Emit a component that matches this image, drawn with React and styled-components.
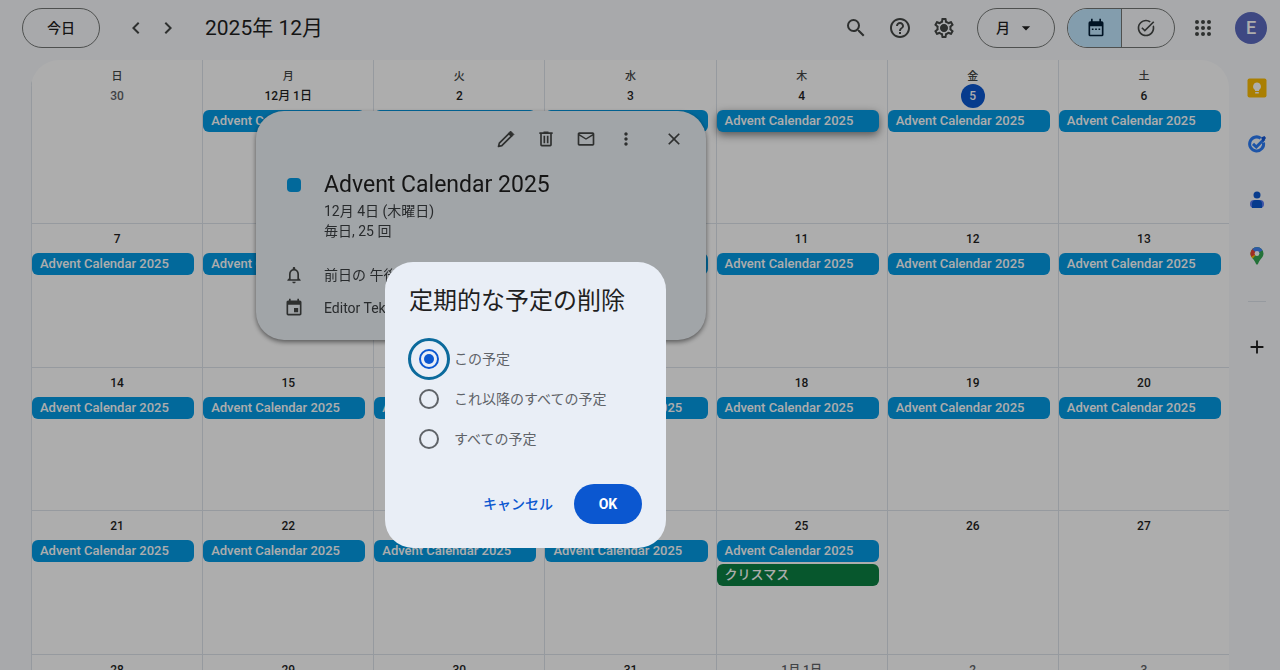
import React, { useState } from "react";
import styled, { createGlobalStyle, css } from "styled-components";
import {
  MdSearch,
  MdHelpOutline,
  MdOutlineSettings,
  MdOutlineTaskAlt,
  MdMailOutline,
  MdMoreVert,
  MdClose,
  MdNotificationsNone,
  MdEvent,
  MdAdd,
  MdChevronLeft,
  MdChevronRight,
  MdArrowDropDown,
} from "react-icons/md";

const GlobalStyle = createGlobalStyle`
  *, *::before, *::after { box-sizing: border-box; }
  body {
    margin: 0;
    overflow: hidden;
    background: #f8fafd;
    color: #1f1f1f;
    font-family: Roboto, "Noto Sans CJK JP", sans-serif;
    font-size: 14px;
    line-height: 20px;
  }
  button { font: inherit; color: inherit; cursor: pointer; }
`;

const Page = styled.div`
  display: flex;
  flex-direction: column;
  height: 100vh;
  overflow: hidden;
`;

const TopBar = styled.header`
  display: flex;
  align-items: center;
  flex: none;
  height: 60px;
  padding: 0 13px 4px 22px;
  color: #444746;
`;

const Pill = styled.button`
  display: flex;
  align-items: center;
  justify-content: center;
  height: 40px;
  width: 78px;
  padding: 0;
  border: 1px solid #747775;
  border-radius: 20px;
  background: transparent;
  color: #1f1f1f;
  font-weight: 500;
`;

const IconButton = styled.button`
  display: flex;
  align-items: center;
  justify-content: center;
  flex: none;
  width: ${(p) => p.$size || 40}px;
  height: 40px;
  padding: 0;
  border: 0;
  border-radius: 50%;
  background: transparent;
  color: #444746;
`;

const Pager = styled.div`
  display: flex;
  margin-left: 20px;
`;

const MonthTitle = styled.h1`
  flex: 1;
  margin: 0 0 0 21px;
  color: #1f1f1f;
  font-size: 21px;
  line-height: 28px;
  font-weight: 400;
`;

const ViewPill = styled(Pill)`
  gap: 6px;
  margin: 0 12px 0 11px;
`;

const ModeSwitch = styled.div`
  display: flex;
  width: 108px;
  height: 40px;
  margin-right: 8px;
  border: 1px solid #747775;
  border-radius: 20px;
  overflow: hidden;
`;

const ModeButton = styled.button`
  display: flex;
  flex: 1;
  align-items: center;
  justify-content: center;
  padding: 0 0 0 4px;
  border: 0;
  background: ${(p) => (p.$active ? "#c2e7ff" : "transparent")};
  color: ${(p) => (p.$active ? "#001d35" : "#444746")};
  & + & {
    padding: 0 4px 0 0;
    border-left: 1px solid #747775;
  }
`;

const Avatar = styled.button`
  width: 32px;
  height: 32px;
  margin-left: 12px;
  padding: 0;
  border: 0;
  border-radius: 50%;
  background: #5c6bc0;
  color: #fff;
  font-size: 18px;
  font-weight: 500;
`;

const Content = styled.div`
  display: flex;
  flex: 1;
  min-height: 0;
`;

const Board = styled.main`
  flex: 1;
  margin-left: 31px;
  border-radius: 28px 28px 0 0;
  background: #fff;
  overflow: hidden;
`;

const WeekdayRow = styled.div`
  display: grid;
  grid-template-columns: repeat(7, 1fr);
  height: 21px;
`;

const Weekday = styled.div`
  padding-top: 9px;
  border-left: 1px solid #dde3ea;
  color: #444746;
  font-size: 11px;
  line-height: 16px;
  font-weight: 500;
  text-align: center;
`;

const MonthGrid = styled.div`
  display: grid;
  grid-template-columns: repeat(7, 1fr);
  grid-template-rows: repeat(5, 1fr);
  height: 717px;
`;

const DayCell = styled.div`
  display: flex;
  flex-direction: column;
  align-items: center;
  gap: 2px;
  min-width: 0;
  padding: 3px 8px 0 0;
  border-left: 1px solid #dde3ea;
  border-bottom: 1px solid #dde3ea;
`;

const DayNumber = styled.div`
  min-width: 24px;
  height: 24px;
  margin-left: 8px;
  border-radius: 12px;
  color: #1f1f1f;
  font-size: 12px;
  line-height: 24px;
  font-weight: 500;
  text-align: center;
  ${(p) => p.$outside && css`color: #5f6368;`}
  ${(p) => p.$today && css`background: #0b57d0; color: #fff;`}
`;

const EventChip = styled.button`
  width: 100%;
  height: 22px;
  padding: 0 8px;
  border: 0;
  border-radius: 6px;
  background: ${(p) => (p.$holiday ? "#0b8043" : "#039be5")};
  color: #fff;
  font-size: 13px;
  line-height: 22px;
  font-weight: 500;
  text-align: left;
  white-space: nowrap;
  overflow: hidden;
  ${(p) => p.$open && css`box-shadow: 0 3px 8px rgba(0, 0, 0, 0.5);`}
`;

const SidePanel = styled.aside`
  display: flex;
  flex-direction: column;
  align-items: center;
  width: 51px;
  padding-left: 5px;
`;

const SideButton = styled(IconButton)`
  height: 56px;
  color: #1f1f1f;
`;

const SideRule = styled.hr`
  width: 18px;
  margin: 17px 0;
  border: 0;
  border-top: 1px solid #dde3ea;
`;

const EventCard = styled.section`
  position: fixed;
  top: 111px;
  left: 256px;
  width: 450px;
  padding: 8px 12px 22px 26px;
  border-radius: 28px;
  background: #eef3f8;
  box-shadow: 0 2px 5px rgba(0, 0, 0, 0.5);
  color: #3c4043;
`;

const CardTools = styled.div`
  display: flex;
  justify-content: flex-end;
  margin-bottom: 12px;
  & > :last-child { margin-left: 8px; }
`;

const CardRow = styled.div`
  display: flex;
  gap: 18px;
  margin-top: ${(p) => p.$gap || 0}px;
`;

const CardMark = styled.div`
  display: flex;
  align-items: center;
  justify-content: center;
  width: 24px;
  height: ${(p) => p.$height || 20}px;
  color: #444746;
`;

const ColorDot = styled.span`
  width: 14px;
  height: 14px;
  border-radius: 4px;
  background: #039be5;
`;

const CardTitle = styled.h2`
  margin: 0 0 2px;
  color: #1f1f1f;
  font-size: 23px;
  line-height: 28px;
  font-weight: 400;
`;

const Scrim = styled.div`
  position: fixed;
  inset: 0;
  background: rgba(0, 0, 0, 0.32);
`;

const Dialog = styled.form`
  position: fixed;
  top: 262px;
  left: 385px;
  width: 281px;
  padding: 21px 24px 24px;
  border-radius: 28px;
  background: #e9eef6;
`;

const DialogTitle = styled.h2`
  margin: 0;
  font-size: 24px;
  line-height: 36px;
  font-weight: 400;
  white-space: nowrap;
`;

const Choices = styled.fieldset`
  margin: 20px 0 0;
  padding: 0 0 0 10px;
  border: 0;
`;

const Choice = styled.label`
  display: flex;
  align-items: center;
  gap: 15px;
  height: 40px;
  color: #5f6368;
`;

const Radio = styled.input`
  appearance: none;
  display: grid;
  place-items: center;
  flex: none;
  width: 20px;
  height: 20px;
  margin: 0;
  border: 2px solid #5f6368;
  border-radius: 50%;
  &:checked {
    border-color: #0b57d0;
    outline: 3px solid #0b6a9c;
    outline-offset: 8px;
  }
  &:checked::before {
    content: "";
    width: 10px;
    height: 10px;
    border-radius: 50%;
    background: #0b57d0;
  }
`;

const Actions = styled.div`
  display: flex;
  justify-content: flex-end;
  gap: 9px;
  margin-top: 25px;
`;

const DialogButton = styled.button`
  min-width: 68px;
  height: 40px;
  padding: 0 12px;
  border: 0;
  border-radius: 20px;
  background: ${(p) => (p.$primary ? "#0b57d0" : "transparent")};
  color: ${(p) => (p.$primary ? "#fff" : "#0b57d0")};
  font-weight: ${(p) => (p.$primary ? 700 : 500)};
`;

const GearIcon = () => (
  <svg width="24" height="24" viewBox="0 0 24 24">
    <MdOutlineSettings size={24} />
    <circle cx="12" cy="12" r="3.4" fill="currentColor" />
  </svg>
);

const CalendarIcon = () => (
  <svg width="20" height="20" viewBox="0 0 24 24" fill="currentColor">
    <path fillRule="evenodd" d="M6 1h2v3h8V1h2v3h1a2 2 0 0 1 2 2v14a2 2 0 0 1-2 2H5a2 2 0 0 1-2-2V6a2 2 0 0 1 2-2h1zM5 10v10h14V10z" />
    <path d="M7 12.500h2v2H7zM11 12.500h2v2h-2zM15 12.500h2v2h-2z" />
  </svg>
);

const PencilIcon = () => (
  <svg width="20" height="20" viewBox="0 0 24 24" fill="none" stroke="currentColor" strokeWidth="2" strokeLinejoin="round">
    <path d="M4 17l11.500-11.500 3 3L7 20l-4 1z" />
    <path d="M15 5l2.500-2.500 4 4L19 9z" fill="currentColor" strokeWidth="1" />
  </svg>
);

const TrashIcon = () => (
  <svg width="20" height="20" viewBox="0 0 24 24" fill="none" stroke="currentColor" strokeWidth="2">
    <path d="M4 5h16M9 4h6M6 5v14a1 1 0 0 0 1 1h10a1 1 0 0 0 1-1V5M10 8v9M14 8v9" />
  </svg>
);

const AppsIcon = () => (
  <svg width="24" height="24" viewBox="0 0 24 24" fill="currentColor">
    {[6, 12, 18].map((y) => [6, 12, 18].map((x) => <circle key={`${x}-${y}`} cx={x} cy={y} r="2" />))}
  </svg>
);

const KeepIcon = () => (
  <svg width="20" height="20" viewBox="0 0 20 20">
    <rect width="19" height="19" x="0.5" y="0.5" rx="2" fill="#fbbc04" />
    <path d="M10 4.500a4 4 0 0 0-2 7.400V13h4v-1.100a4 4 0 0 0-2-7.400zM8.200 14h3.600v1.500H8.200z" fill="#fff" />
  </svg>
);

const TasksIcon = () => (
  <svg width="20" height="20" viewBox="0 0 20 20" fill="none">
    <path d="M13.700 4.200A7 7 0 1 0 16.500 8.500" stroke="#2c7df7" strokeWidth="3" />
    <path d="M6 9.800l3.300 3.200 8-8" stroke="#2c7df7" strokeWidth="3" />
    <path d="M14 3.500l3.500-1.500 1.500 2-3 4z" fill="#1558d6" />
  </svg>
);

const ContactsIcon = () => (
  <svg width="20" height="20" viewBox="0 0 20 20">
    <circle cx="10" cy="5" r="3.500" fill="#0b57d0" />
    <rect x="3" y="10" width="14" height="8" rx="4" fill="#5b7cf5" />
    <path d="M5 14a4 4 0 0 1 4-4h2a4 4 0 0 1 4 4v4H5z" fill="#0b57d0" />
  </svg>
);

const MapsIcon = () => (
  <svg width="20" height="20" viewBox="0 0 20 20">
    <clipPath id="pin">
      <path d="M10 1a6.500 6.500 0 0 0-6.500 6.500c0 4 3.700 5.500 5.300 10 .4 1.500 2 1.500 2.400 0 1.600-4.500 5.300-6 5.300-10A6.500 6.500 0 0 0 10 1z" />
    </clipPath>
    <g clipPath="url(#pin)">
      <rect width="20" height="20" fill="#34a853" />
      <path d="M10 7.500L2 17V4z" fill="#fbbc04" />
      <path d="M10 7.500L2 12V0h3z" fill="#ea4335" />
      <path d="M10 7.500L4 2V0h14v3z" fill="#4285f4" />
    </g>
    <circle cx="10" cy="7.500" r="2.400" fill="#fff" />
  </svg>
);

const weekdays = ["日", "月", "火", "水", "木", "金", "土"];

const days = Array.from({ length: 35 }, (_, i) => {
  const number = i === 0 ? 30 : i > 31 ? i - 31 : i;
  const label = i === 1 ? "12月 1日" : i === 32 ? "1月 1日" : String(number);
  return {
    label,
    outside: i === 0 || i > 31,
    today: i === 5,
    advent: i >= 1 && i <= 25,
    open: i === 4,
    christmas: i === 25,
  };
});

const choices = ["この予定", "これ以降のすべての予定", "すべての予定"];

export default function App() {
  const [choice, setChoice] = useState(0);

  return (
    <>
      <GlobalStyle />
      <Page>
        <TopBar>
          <Pill type="button">今日</Pill>
          <Pager>
            <IconButton $size={32} aria-label="前の月"><MdChevronLeft size={24} /></IconButton>
            <IconButton $size={32} aria-label="次の月"><MdChevronRight size={24} /></IconButton>
          </Pager>
          <MonthTitle>2025年 12月</MonthTitle>
          <IconButton $size={44} aria-label="検索"><MdSearch size={24} /></IconButton>
          <IconButton $size={44} aria-label="サポート"><MdHelpOutline size={24} /></IconButton>
          <IconButton $size={44} aria-label="設定"><GearIcon /></IconButton>
          <ViewPill type="button">月<MdArrowDropDown size={20} /></ViewPill>
          <ModeSwitch>
            <ModeButton $active aria-label="カレンダー"><CalendarIcon /></ModeButton>
            <ModeButton aria-label="タスク"><MdOutlineTaskAlt size={20} /></ModeButton>
          </ModeSwitch>
          <IconButton aria-label="アプリ"><AppsIcon /></IconButton>
          <Avatar type="button">E</Avatar>
        </TopBar>

        <Content>
          <Board>
            <WeekdayRow>
              {weekdays.map((name) => <Weekday key={name}>{name}</Weekday>)}
            </WeekdayRow>
            <MonthGrid>
              {days.map((day, i) => (
                <DayCell key={i}>
                  <DayNumber $outside={day.outside} $today={day.today}>{day.label}</DayNumber>
                  {day.advent && <EventChip $open={day.open}>Advent Calendar 2025</EventChip>}
                  {day.christmas && <EventChip $holiday>クリスマス</EventChip>}
                </DayCell>
              ))}
            </MonthGrid>
          </Board>
          <SidePanel>
            <SideButton aria-label="Keep"><KeepIcon /></SideButton>
            <SideButton aria-label="ToDo リスト"><TasksIcon /></SideButton>
            <SideButton aria-label="連絡先"><ContactsIcon /></SideButton>
            <SideButton aria-label="マップ"><MapsIcon /></SideButton>
            <SideRule />
            <SideButton aria-label="アドオンを取得"><MdAdd size={22} /></SideButton>
          </SidePanel>
        </Content>
      </Page>

      <EventCard>
        <CardTools>
          <IconButton aria-label="編集"><PencilIcon /></IconButton>
          <IconButton aria-label="削除"><TrashIcon /></IconButton>
          <IconButton aria-label="メール"><MdMailOutline size={20} /></IconButton>
          <IconButton aria-label="オプション"><MdMoreVert size={20} /></IconButton>
          <IconButton aria-label="閉じる"><MdClose size={20} /></IconButton>
        </CardTools>
        <CardRow>
          <CardMark $height={28}><ColorDot /></CardMark>
          <div>
            <CardTitle>Advent Calendar 2025</CardTitle>
            <div>12月 4日 (木曜日)</div>
            <div>毎日, 25 回</div>
          </div>
        </CardRow>
        <CardRow $gap={24}>
          <CardMark><MdNotificationsNone size={20} /></CardMark>
          <div>前日の 午後</div>
        </CardRow>
        <CardRow $gap={13}>
          <CardMark><MdEvent size={20} /></CardMark>
          <div>Editor Tek</div>
        </CardRow>
      </EventCard>

      <Scrim />

      <Dialog role="dialog" aria-labelledby="dialog-title" onSubmit={(e) => e.preventDefault()}>
        <DialogTitle id="dialog-title">定期的な予定の削除</DialogTitle>
        <Choices aria-labelledby="dialog-title">
          {choices.map((text, i) => (
            <Choice key={text}>
              <Radio type="radio" name="scope" checked={choice === i} onChange={() => setChoice(i)} />
              {text}
            </Choice>
          ))}
        </Choices>
        <Actions>
          <DialogButton type="button">キャンセル</DialogButton>
          <DialogButton type="submit" $primary>OK</DialogButton>
        </Actions>
      </Dialog>
    </>
  );
}
